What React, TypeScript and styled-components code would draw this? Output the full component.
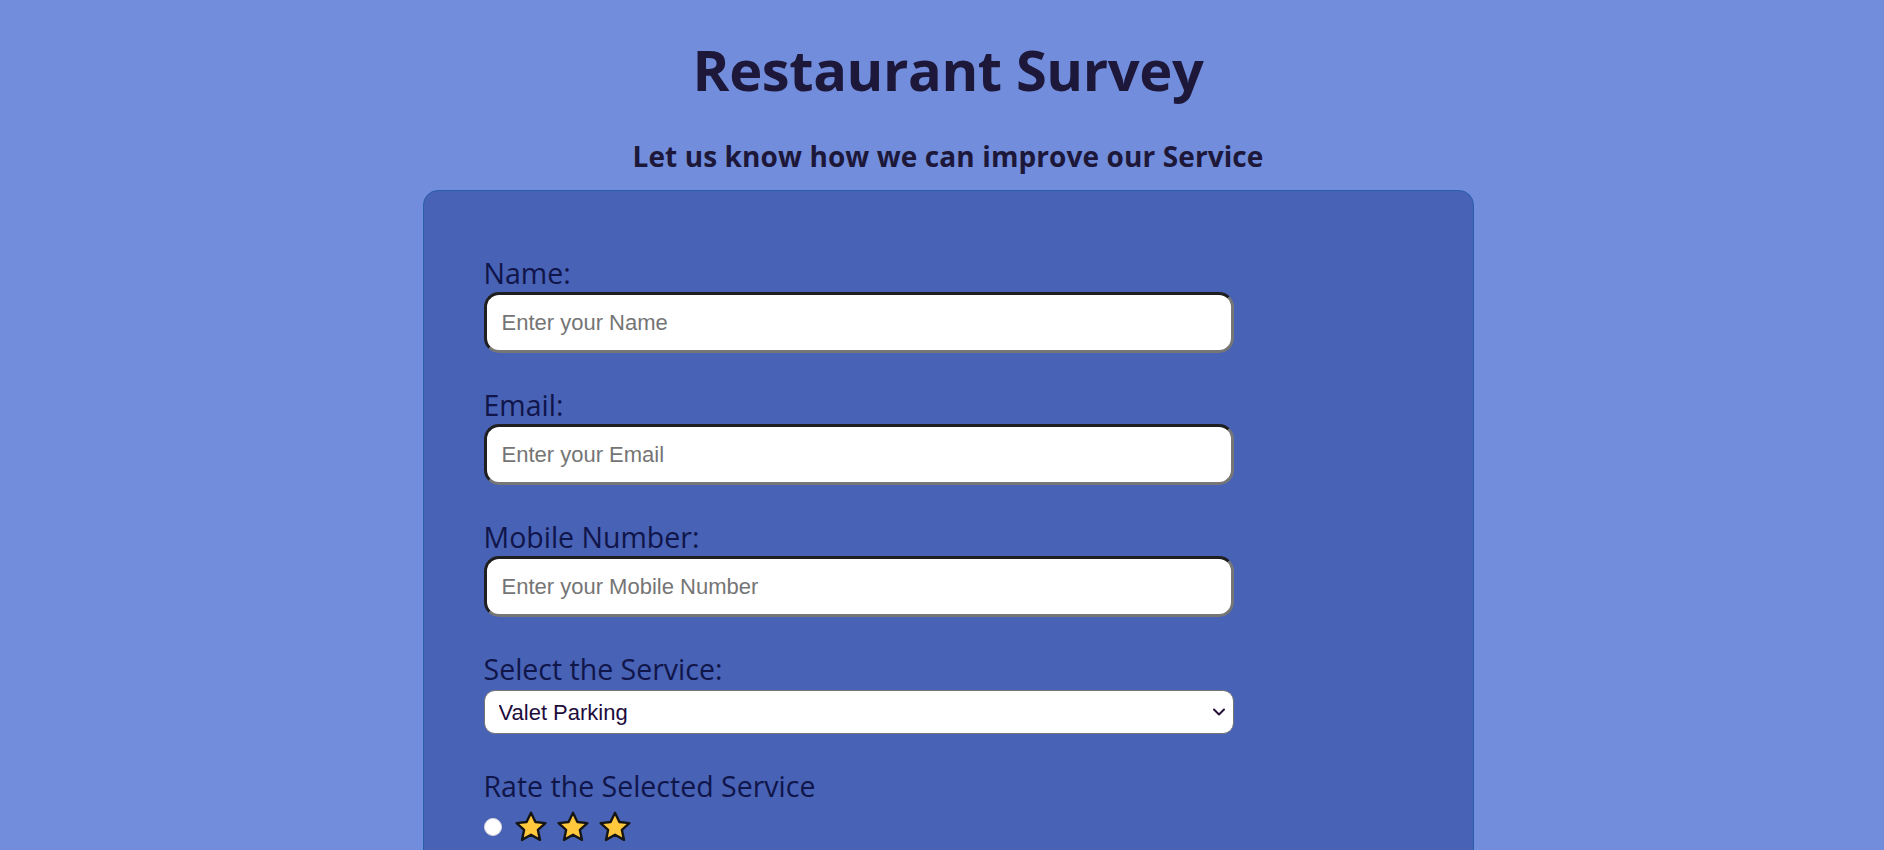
import React from "react";
import styled, { createGlobalStyle } from "styled-components";

const GlobalStyle = createGlobalStyle`
  html, body {
    background: #718ddb;
  }
  body {
    margin: 8px;
    font-family: "Open Sans", "Noto Sans", sans-serif;
  }
`;

const Page = styled.main`
  display: flex;
  flex-direction: column;
  align-items: center;
  padding-left: 12px;
`;

const Title = styled.h1`
  margin: 23px 0 0;
  font-family: "Open Sans", "Noto Sans", sans-serif;
  font-weight: 700;
  font-size: 56px;
  letter-spacing: -0.4px;
  line-height: normal;
  color: #1d1739;
`;

const Subtitle = styled.h3`
  margin: 30px 0 15px;
  font-family: "Open Sans", "Noto Sans", sans-serif;
  font-weight: 700;
  font-size: 28px;
  letter-spacing: 0.1px;
  line-height: normal;
  color: #1d1739;
`;

const Card = styled.form`
  box-sizing: border-box;
  width: 1051px;
  padding: 63px 60px 60px;
  background: #4862b5;
  border: 1px solid #2a5ea9;
  border-radius: 15px;
  display: flex;
  flex-direction: column;
`;

const Field = styled.div`
  display: flex;
  flex-direction: column;
  align-items: flex-start;
  margin-bottom: 33px;
`;

const Label = styled.label`
  font-family: "Open Sans", "Noto Sans", sans-serif;
  font-size: 28.5px;
  line-height: 38px;
  color: #10154a;
`;

const TextInput = styled.input`
  box-sizing: border-box;
  width: 750px;
  height: 61px;
  padding: 0 15px;
  border: 3px solid;
  border-color: #1f1f22 #767676 #767676 #1f1f22;
  border-radius: 15px;
  background: #ffffff;
  font-family: "Liberation Sans", Arial, sans-serif;
  font-size: 22px;
  color: #222;
  outline: none;

  &::placeholder {
    color: #757575;
  }
`;

const SelectWrap = styled.div`
  position: relative;
  width: 750px;
  margin-top: 2px;
`;

const Select = styled.select`
  box-sizing: border-box;
  width: 100%;
  height: 44px;
  padding: 0 40px 0 14px;
  appearance: none;
  border: 1px solid #767676;
  border-radius: 11px;
  background: #ffffff;
  font-family: "Liberation Sans", Arial, sans-serif;
  font-size: 22px;
  color: #1e0c3c;
  outline: none;
`;

const Chevron = styled.svg`
  position: absolute;
  right: 8px;
  top: 50%;
  margin-top: -6px;
  pointer-events: none;
`;

const RatingRow = styled.div`
  display: flex;
  align-items: center;
  gap: 12px;
  margin-top: 6px;
`;

const Radio = styled.input`
  appearance: none;
  margin: 0;
  width: 18px;
  height: 18px;
  border-radius: 50%;
  background: #ffffff;
  border: 1px solid #d8d8e0;
  box-sizing: border-box;
`;

const Stars = styled.span`
  display: inline-flex;
  align-items: center;
  gap: 8px;
`;

const Star = () => (
  <svg width="34" height="32" viewBox="0 0 34 32" aria-hidden="true">
    <path
      d="M17 1.8 L21.4 11 L31.4 12.1 L23.9 18.9 L26 28.9 L17 23.8 L8 28.9 L10.1 18.9 L2.6 12.1 L12.6 11 Z"
      fill="#ffc83d"
      stroke="#161616"
      strokeWidth="2.4"
      strokeLinejoin="round"
    />
  </svg>
);

export default function App() {
  return (
    <>
      <GlobalStyle />
      <Page>
        <Title>Restaurant Survey</Title>
        <Subtitle>Let us know how we can improve our Service</Subtitle>
        <Card onSubmit={(e) => e.preventDefault()}>
          <Field>
            <Label htmlFor="name">Name:</Label>
            <TextInput id="name" type="text" placeholder="Enter your Name" />
          </Field>
          <Field>
            <Label htmlFor="email">Email:</Label>
            <TextInput id="email" type="email" placeholder="Enter your Email" />
          </Field>
          <Field>
            <Label htmlFor="mobile">Mobile Number:</Label>
            <TextInput id="mobile" type="tel" placeholder="Enter your Mobile Number" />
          </Field>
          <Field>
            <Label htmlFor="service">Select the Service:</Label>
            <SelectWrap>
              <Select id="service" defaultValue="valet">
                <option value="valet">Valet Parking</option>
                <option value="dining">Dining</option>
                <option value="delivery">Delivery</option>
              </Select>
              <Chevron width="14" height="12" viewBox="0 0 14 12" aria-hidden="true">
                <path
                  d="M2 3.5 L7 8.5 L12 3.5"
                  fill="none"
                  stroke="#24123a"
                  strokeWidth="2"
                  strokeLinecap="round"
                  strokeLinejoin="round"
                />
              </Chevron>
            </SelectWrap>
          </Field>
          <Field>
            <Label>Rate the Selected Service</Label>
            <RatingRow>
              <Radio type="radio" name="rating" value="3" aria-label="3 stars" />
              <Stars>
                <Star />
                <Star />
                <Star />
              </Stars>
            </RatingRow>
          </Field>
        </Card>
      </Page>
    </>
  );
}
